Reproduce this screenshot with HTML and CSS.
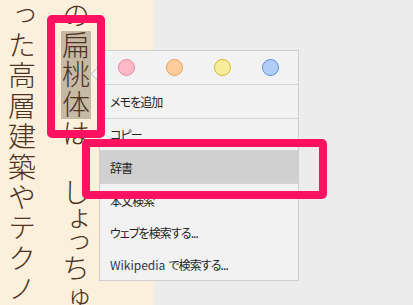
FILE: index.html
```html
<!DOCTYPE html>
<html lang="ja">
<head>
<meta charset="utf-8">
<link rel="stylesheet" href="styles.css">
</head>
<body>
<div class="screen">
  <div class="reader">
    <p class="col">の<span class="sel">扁桃体</span>は　し<span class="pk">ょっ</span>ちゅう</p>
    <p class="col col-wide">った高層建築やテクノロジー</p>
  </div>
  <div class="side"></div>

  <div class="menu">
    <div class="colors">
      <span class="dot dot-pink"></span>
      <span class="dot dot-orange"></span>
      <span class="dot dot-yellow"></span>
      <span class="dot dot-blue"></span>
    </div>
    <div class="item sep">メモを追加</div>
    <div class="item item-short sep">コピー</div>
    <div class="item active sep">辞書</div>
    <div class="item">本文検索</div>
    <div class="item">ウェブを検索する...</div>
    <div class="item"><span class="latin">Wikipedia</span>で検索する...</div>
  </div>

  <div class="mark mark-a"></div>
  <div class="mark mark-b"></div>
</div>
</body>
</html>
```

FILE: styles.css
```css
html, body {
  margin: 0;
  padding: 0;
}

body {
  width: 413px;
  height: 305px;
  overflow: hidden;
  background: #ececec;
}

.screen {
  position: relative;
  display: flex;
  width: 413px;
  height: 305px;
}

.reader {
  width: 154px;
  height: 305px;
  background: #fbf0dc;
  overflow: hidden;
  flex: none;
  display: flex;
  flex-direction: row-reverse;
  gap: 24px;
  padding-right: 63px;
  box-sizing: border-box;
}

.side {
  flex: 1;
  background: #ececec;
}

.col {
  margin: 0;
  writing-mode: vertical-rl;
  width: 30px;
  height: 305px;
  padding-top: 1px;
  box-sizing: border-box;
  flex: none;
  line-height: 30px;
  white-space: nowrap;
  font-family: "Noto Sans CJK JP", sans-serif;
  font-weight: 300;
  font-size: 28px;
  letter-spacing: 1.5px;
  color: #4e3222;
}

.col-wide {
  letter-spacing: 2.4px;
}

.sel {
  background: linear-gradient(#c6baa5, #c6baa5) center / 30px 100% no-repeat;
}

.pk {
  font-feature-settings: "vpal" 1;
}

.menu {
  position: absolute;
  left: 99px;
  top: 50px;
  width: 198px;
  border: 1px solid #cfcfcf;
  background: #f2f2f2;
  font-family: "Noto Sans CJK JP", sans-serif;
  font-size: 12px;
  font-feature-settings: "palt" 1;
  letter-spacing: -0.9px;
  color: #222;
}

.menu::before {
  content: "";
  position: absolute;
  left: -7px;
  top: 17px;
  width: 11px;
  height: 11px;
  background: #f4f4f4;
  border-left: 1px solid #cfcfcf;
  border-bottom: 1px solid #cfcfcf;
  transform: rotate(45deg);
}

.colors {
  height: 33px;
  display: flex;
  align-items: center;
  gap: 31px;
  padding-left: 18px;
  border-bottom: 1px solid #d4d4d4;
}

.dot {
  width: 17px;
  height: 17px;
  border-radius: 50%;
  box-sizing: border-box;
  border: 1px solid;
}

.dot-pink { background: #ffb8c8; border-color: #e08aa0; }
.dot-orange { background: #ffcc9c; border-color: #e8a060; }
.dot-yellow { background: #f8ee9a; border-color: #d8b432; }
.dot-blue { background: #b2cdf8; border-color: #5a8ed8; }

.item {
  height: 32px;
  display: flex;
  align-items: center;
  padding-left: 10px;
  white-space: nowrap;
}

.item.sep {
  height: 33px;
  border-bottom: 1px solid #d4d4d4;
}

.item.item-short {
  height: 31px;
}

.item.active {
  height: 32px;
  background: #d0d0d0;
}

.latin {
  color: #26365a;
  letter-spacing: 0;
  margin-right: 3px;
}

.mark {
  position: absolute;
  box-sizing: border-box;
  border: 8px solid #fe1160;
  border-radius: 5px;
}

.mark-a {
  left: 47px;
  top: 15px;
  width: 58px;
  height: 123px;
}

.mark-b {
  left: 82px;
  top: 139px;
  width: 245px;
  height: 60px;
}
```
